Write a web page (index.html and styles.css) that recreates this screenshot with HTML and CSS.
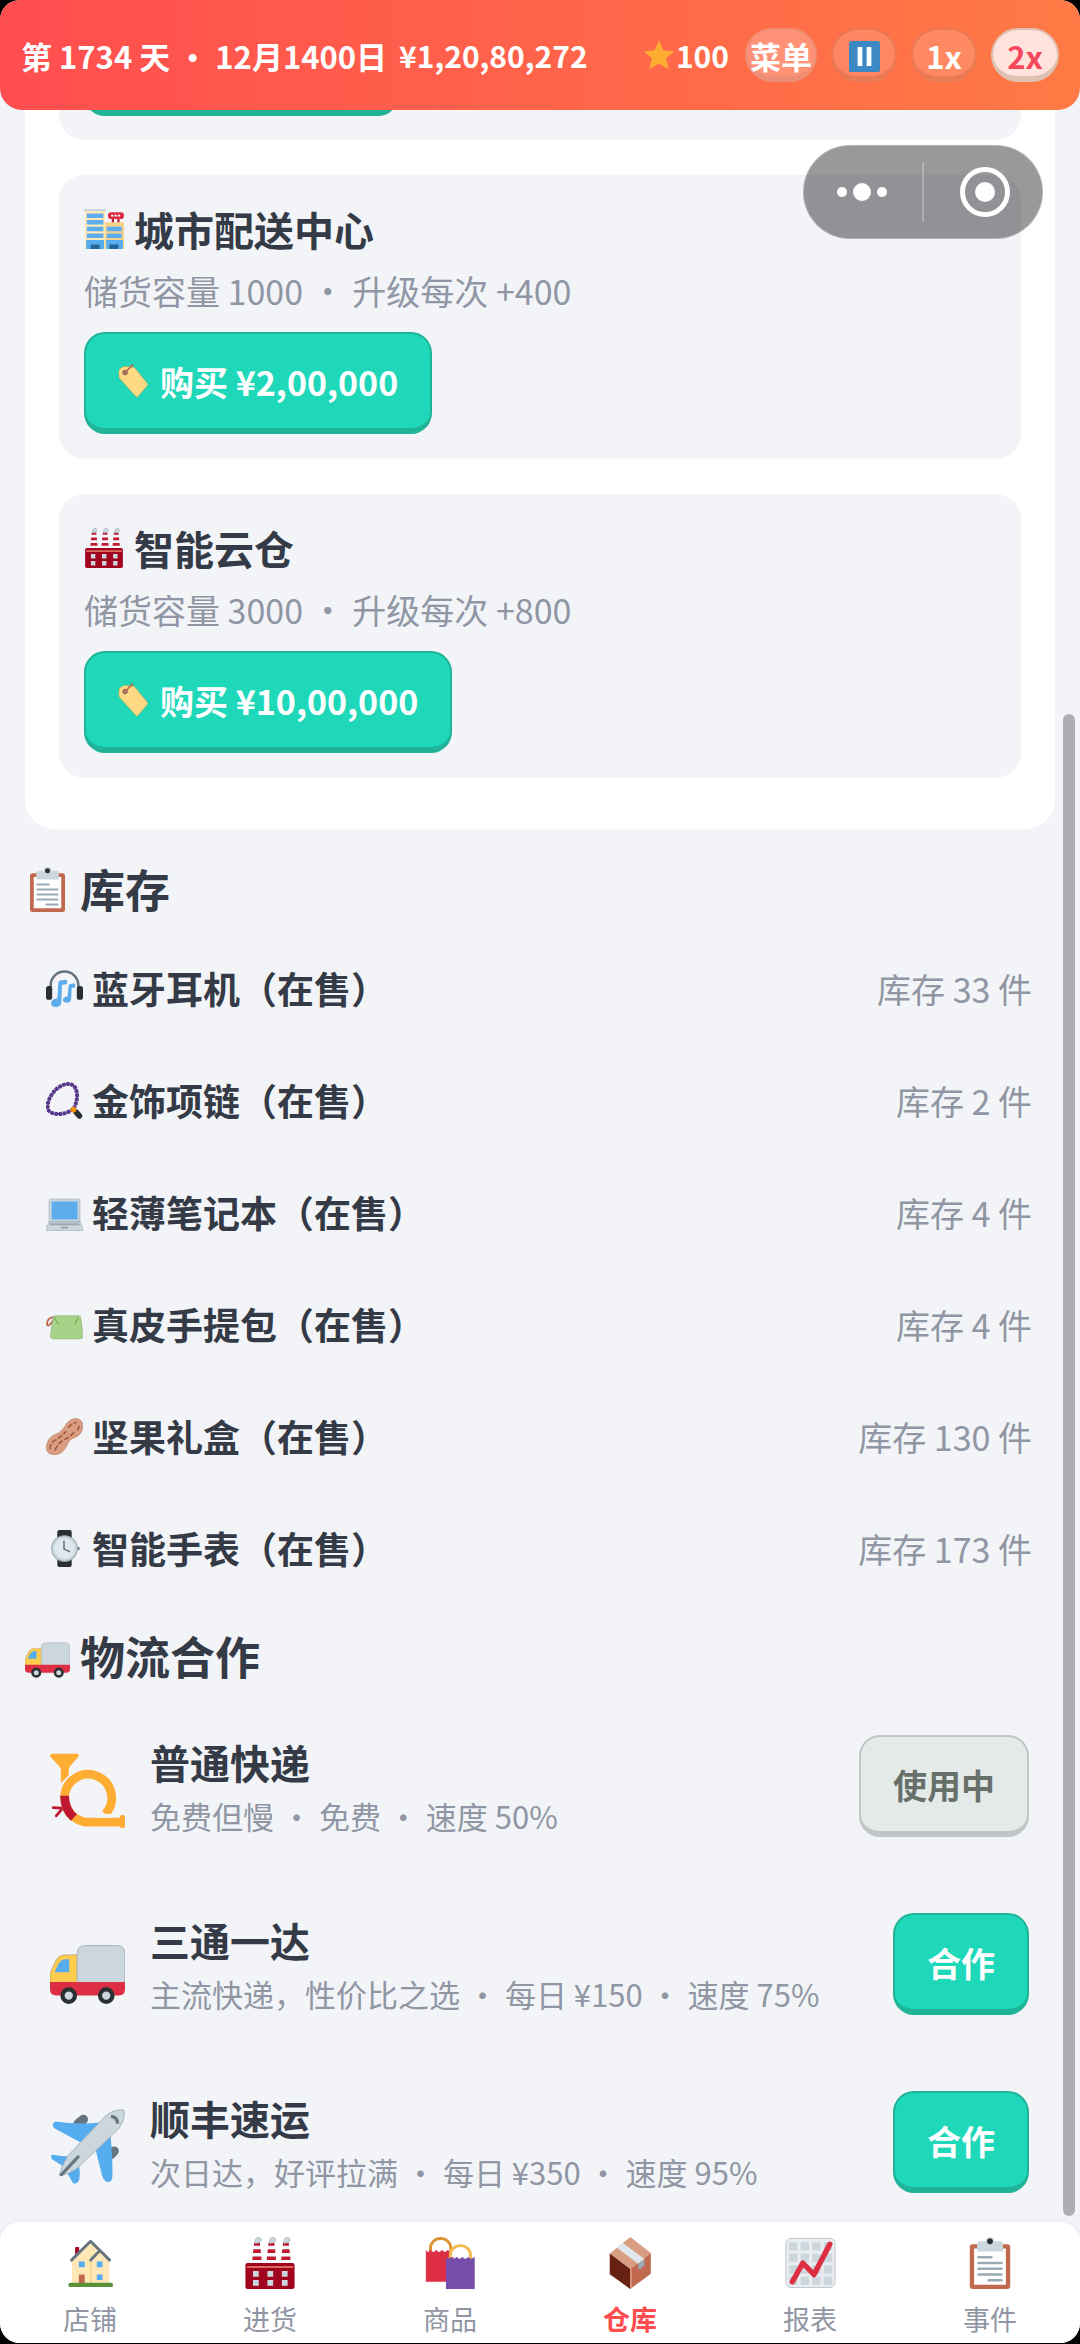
FILE: index.html
```
<!DOCTYPE html><html lang="zh-CN"><head><meta charset="utf-8"><meta name="viewport" content="width=device-width">
<title>仓库</title>
<link rel="stylesheet" href="styles.css">
</head>
<body>
<svg class="defs" aria-hidden="true">
  <symbol id="i-star" viewBox="0 0 36 36">
    <path fill="#ffac33" d="M18 1.500l5 11.300 12.500 1.100-9.500 8.200 2.900 12.200L18 27.800 7.100 34.300 10 22.100.5 13.900 13 12.800z" stroke="#ffac33" stroke-linejoin="round"/>
  </symbol>
  <symbol id="i-pause" viewBox="0 0 36 36">
    <rect width="36" height="36" rx="3" fill="#3b88c3"/>
    <path fill="#fff" d="M10 7h5.500v22H10zM20.500 7H26v22h-5.500z"/>
  </symbol>
  <symbol id="i-store" viewBox="0 0 36 36">
    <path fill="#ffe8b6" d="M1 1h18v35H1z"/>
    <path fill="#f4d28a" d="M19 12h17v24H19z"/>
    <path fill="#ccd6dd" d="M0 0h20v2H0z"/>
    <path fill="#5dadec" d="M2.500 4h15v4h-15zM2.500 10h15v4h-15zM2.500 16h15v4h-15zM2.500 22h15v4h-15zM20.500 16H34v4H20.500zM20.500 22H34v4H20.500z"/>
    <path fill="#55acee" d="M2 28h16v8H2zM20 28h15v8H20z"/>
    <path fill="#226699" d="M6 32h8v4H6zM23 32h8v4h-8z"/>
    <path fill="#be1931" d="M25 7h2v5h-2zM30 7h2v5h-2z"/>
    <rect x="21.500" y="3" width="14.500" height="6" rx="3" fill="#dd2e44"/>
    <path stroke="#fff" stroke-width="1.500" stroke-dasharray="2 1" d="M24.500 6h9"/>
  </symbol>
  <symbol id="i-factory" viewBox="0 0 36 36">
    <path fill="#f5f8fa" d="M7 4h4l1.500 15h-7zM17 4h4l1.500 15h-7zM27 4h4l1.500 15h-7z"/>
    <path fill="#be1931" d="M7 4h4l.200 2H6.800zM6.500 8.500h5l.200 2.500H6.200zM6 13.500h6l.200 2.500H5.700zM17 4h4l.200 2h-4.400zM16.500 8.500h5l.200 2.500h-5.500zM16 13.500h6l.200 2.500h-6.500zM27 4h4l.200 2h-4.400zM26.500 8.500h5l.200 2.500h-5.500zM26 13.500h6l.200 2.500h-6.500z"/>
    <path fill="#ccd6dd" stroke="#99aab5" stroke-width=".5" d="M8 4.500c-1-2 0-4.200 2-4.200s2.500 2.400 1 3.400zM18 4.500c-1-2 0-4.200 2-4.200s2.500 2.400 1 3.400zM28 4.500c-1-2 0-4.200 2-4.200s2.500 2.400 1 3.400z"/>
    <rect x="1" y="18" width="34" height="18" rx="1.500" fill="#a0041e"/>
    <path fill="#dd6b5c" d="M2 20h32v1.500H2z"/>
    <path fill="#ccd6dd" d="M6.200 23.500h4v4h-4zM16.200 23.500h4v4h-4zM26.200 23.500h4v4h-4zM6.200 29.800h4v4h-4zM16.200 29.800h4v4h-4zM26.200 29.800h4v4h-4z"/>
  </symbol>
  <symbol id="i-tag" viewBox="0 0 36 36">
    <path fill="#ffd983" stroke="#c9a24e" stroke-width=".6" stroke-linejoin="round" d="M1 13V7.500Q1 6 2.200 5.200L5 3.200Q6 2.500 7.500 2.600L16 3.500Q17.500 3.700 18.400 5L31 20.500Q32 21.600 31 22.800L21 34.500Q20 35.600 19 34.500L2 15.500Q1 14.300 1 13z"/>
    <circle cx="7.500" cy="9" r="3" fill="#99795a"/>
    <path stroke="#c1694f" stroke-width="1.800" stroke-linecap="round" d="M7.500 9L15.500.9"/>
  </symbol>
  <symbol id="i-clipboard" viewBox="0 0 36 36">
    <rect x="4" y="5" width="28" height="31" rx="2" fill="#c1694f"/>
    <path fill="#fff" d="M7 8h22v25H7z"/>
    <path fill="#ccd6dd" d="M25 3h-4a3 3 0 0 0-6 0h-4a2 2 0 0 0-2 2v5h18V5a2 2 0 0 0-2-2z"/>
    <circle cx="18" cy="3" r="2" fill="#292f33"/>
    <path stroke="#99aab5" stroke-width="1.700" stroke-linecap="round" d="M10 14h9M10 18h16M10 22h16M10 26h16M17 30h9"/>
  </symbol>
  <symbol id="i-headphone" viewBox="0 0 36 36">
    <path fill="none" stroke="#66757f" stroke-width="2.500" d="M4.500 20v-5a13.500 13.500 0 0 1 27 0v5"/>
    <rect y="15.500" width="6" height="13.500" rx="2.500" fill="#292f33"/>
    <rect x="30" y="15.500" width="6" height="13.500" rx="2.500" fill="#292f33"/>
    <path fill="#5dadec" d="M12 12.500Q12 10.500 14 10.200L19.500 9.500Q21 9.500 20.500 11.500L20.300 13.500 15.500 14.500 15 31Q15 36 10 36 5 36 5 32.500 5 28.500 11 27.500zM22 15.500Q22 14 24 13.700L27.500 13Q29 13 28.500 15.500L28.300 17 25 17.500 24.500 28Q24 31.800 20.500 31.800 16.500 31.800 16.500 29 16.500 26 21 25.500z"/>
  </symbol>
  <symbol id="i-beads" viewBox="0 0 36 36">
    <path fill="none" stroke="#7450a8" stroke-width="2" d="M27 26C30 20 32 11 28 5 24-.5 15 2 9 8 3 14 0 23 2.500 27.500 6 33 20 32 27 26z"/>
    <path fill="none" stroke="#553788" stroke-width="3.800" stroke-dasharray="3 1" d="M27 26C30 20 32 11 28 5 24-.5 15 2 9 8 3 14 0 23 2.500 27.500 6 33 20 32 27 26z"/>
    <path stroke="#292f33" stroke-width="5.500" stroke-linecap="round" d="M29.500 29.500l3 3.500"/>
    <circle cx="26.800" cy="26.800" r="2.800" fill="#f4900c"/>
  </symbol>
  <symbol id="i-laptop" viewBox="0 0 36 36">
    <path fill="#ccd6dd" stroke="#99aab5" stroke-width=".6" d="M4 5h28q1 0 1 1v21H3V6q0-1 1-1zM3 27h30l3 6.500V35q0 .7-1 .7H1q-1 0-1-.7v-1.500z"/>
    <path fill="#5dadec" d="M5.500 7.300h25.200v17.500H5.500z"/>
    <path fill="#9aa7b0" d="M4 28.500h28l.8 2H3.200zM15 31.500h6l.7 2.200h-7.400z"/>
  </symbol>
  <symbol id="i-clutch" viewBox="0 0 36 36">
    <path fill="none" stroke="#c1694f" stroke-width="1.800" d="M9 11.500C5 10 1 13 1 17.500c0 3 4 1 6-4"/>
    <path fill="#a6d388" stroke="#8fae7d" stroke-width=".6" d="M8.800 9.500h23.500q1.200 0 1.500 1.500L36 29q0 3-3 3H7.500q-3.500 0-3.300-3L7 11.500q.3-2 1.800-2z"/>
    <path fill="none" stroke="#77b255" stroke-width="1.200" d="M8 11l4 7M31.500 11l-3.500 7"/>
  </symbol>
  <symbol id="i-peanut" viewBox="0 0 36 36">
    <path fill="#d99e82" stroke="#b87a5c" stroke-width=".6" d="M19 7C22 2 28-1 32.500 1.500 37 4 36.500 10.500 33.500 15c-3 4-8 4-10.500 7-3 4-4 10-9.500 12.500C8 37 1 36 .5 29.500 0 23 4 18 9 16c5-2 7-4 10-9z"/>
    <path fill="none" stroke="#a0563a" stroke-width="1.500" stroke-linecap="round" stroke-dasharray="4 3" d="M22 9q3-4 7-4.500M4 30q0-6 5-8.500t10-8M9 31q3-7 9-10t11-9M32 8q0 3-3 5"/>
  </symbol>
  <symbol id="i-watch" viewBox="0 0 36 36">
    <path fill="#292f33" d="M13 0h10q2 0 2 2v6H11V2q0-2 2-2zM11 28h14v6q0 2-2 2H13q-2 0-2-2z"/>
    <circle cx="31" cy="18" r="1.800" fill="#66757f"/>
    <circle cx="18" cy="18" r="12.500" fill="#ccd6dd" stroke="#99aab5"/>
    <circle cx="18" cy="18" r="10" fill="#e1e8ed"/>
    <path fill="none" stroke="#66757f" stroke-width="1.500" stroke-linecap="round" d="M17.500 11v7.500l5.500 2.500"/>
  </symbol>
  <symbol id="i-truck" viewBox="0 0 36 36">
    <path fill="#ffcc4d" stroke="#b7a06a" stroke-width=".4" d="M13.500 11.500H7Q4.500 11.500 3 14L.8 18.500Q0 20 0 21.500V26h13.500z"/>
    <path fill="#55acee" d="M9.200 13.500v6.300H2.200L4 16q1.300-2.500 3.500-2.500z"/>
    <path fill="#ccd6dd" stroke="#99aab5" stroke-width=".4" d="M13 26V11q0-4 4-4h15q4 0 4 4v15z"/>
    <path fill="#dd2e44" d="M0 24.500h36V28q0 3-3 3H3q-3 0-3-3z"/>
    <g fill="#ccd6dd" stroke="#292f33" stroke-width="2"><circle cx="9" cy="31" r="3"/><circle cx="27" cy="31" r="3"/></g>
  </symbol>
  <symbol id="i-horn" viewBox="0 0 36 36">
    <path fill="#ffac33" d="M.8.300h12.400q1.200.6.300 1.600L9.500 6.500Q9 7.200 9 8.500v2.200L5.200 14.500V8.500Q5.200 7.500 4.500 6.500L.2 1.800Q-.2.800.8.300z"/>
    <path fill="none" stroke="#ffac33" stroke-width="4.200" d="M26.500 29.300A11.300 11.300 0 1 0 7 21.500Q7.500 31 17 33.200H35"/>
    <path fill="none" stroke="#be1931" stroke-width="4.200" d="M7 20.500Q7 27 11.500 31"/>
    <path fill="none" stroke="#be1931" stroke-width="1.300" stroke-linecap="round" d="M5.500 26.500l-4-.3M5.500 27.200l-2.500 3"/>
    <rect x="33.500" y="29.800" width="2.500" height="6.200" rx="1" fill="#ffac33"/>
    <path fill="#f2f4f8" d="M23 29.200h7v1.900h-7z"/>
  </symbol>
  <symbol id="i-plane" viewBox="0 0 36 36">
    <path stroke="#66757f" stroke-width="4.500" stroke-linecap="round" d="M13.500 7l2.500-2M29 22l1.800-1.800"/>
    <path fill="#55acee" d="M2.500 6Q13 7.500 24 6.500L14.500 16 2.500 9.500Q0 7.500 2.500 6zM29 12q1 11 1 19.500 0 3.500-2 3.500t-3-3L22 20zM1.500 22Q6 23 9.500 22.500L7 28 .8 24Q0 22 1.500 22zM13.700 26q1 4.500.3 8-1 2.500-3 1.500L7 28.500z"/>
    <path fill="#ccd6dd" stroke="#99aab5" stroke-width=".4" d="M35.500.5q.8 5-3 9.500L13 28.500Q9 31.500 4.500 32 6 26 9 22L26.500 3.500Q31-.2 35.500.5z"/>
    <path fill="none" stroke="#66757f" stroke-width="1.600" d="M29.300 3.500q3 .3 3.200 3.500"/>
    <path stroke="#66757f" stroke-width="1.500" stroke-linecap="round" d="M5.500 31.500L13.500 23"/>
  </symbol>
  <symbol id="i-house" viewBox="0 0 36 36">
    <path fill="#a0041e" d="M7.700 7h2.800v6H7.700z"/>
    <path fill="#ffe8b6" d="M5.500 16L18.400 3l13 13v16h-26z"/>
    <path stroke="#f4d28a" d="M18.500 16v16"/>
    <path fill="none" stroke="#66757f" stroke-width="2" stroke-linecap="round" stroke-linejoin="round" d="M5.200 16L18.400 3l13.200 13M18.500 16l6-6.300"/>
    <path fill="#55acee" d="M10.300 17h4v4h-4zM22.700 17h4v4h-4zM22.700 26h4v3.700h-4z"/>
    <path fill="#c1694f" d="M10.300 26h4v6h-4z"/>
    <rect x="3" y="31.700" width="31" height="3" rx="1.500" fill="#5c913b"/>
  </symbol>
  <symbol id="i-bags" viewBox="0 0 36 36">
    <path fill="none" stroke="#da9233" stroke-width="2" d="M4.500 11V7.500a7 6.500 0 0 1 14 0V11"/>
    <path fill="#dd2e44" d="M1.300 9l1.600 1.500L4.500 9l2 1.500 2-1.500 2 1.500 2-1.500 2 1.500 2-1.500 2 1.500L20.500 9v22H1.300z"/>
    <path fill="#fff" d="M18.200 14v-1.500a7 6.500 0 0 1 14 0V14z"/>
    <path fill="none" stroke="#f2bb4e" stroke-width="2" d="M18.200 16v-3.500a7 6.500 0 0 1 14 0V16"/>
    <path fill="#744eaa" d="M15.200 13.800l1.600 1.400 1.800-1.400 2 1.400 2-1.400 2 1.400 2-1.400 2 1.400 2-1.400 2 1.400 2.500-1.400V36H15.200z"/>
  </symbol>
  <symbol id="i-box" viewBox="0 0 36 36">
    <path fill="#d99e82" d="M18.200 0l14.200 11-14.200 11.200L4 11.500z"/>
    <path fill="#662113" d="M4 11.500l14.200 10.700V36L4 25.800z"/>
    <path fill="#c1694f" d="M32.400 11v14.500L18.200 36V22.200z"/>
    <path stroke="#d99e82" d="M18.700 22v13.500"/>
    <path fill="#e1e8ed" d="M12.800 4L8.700 7.300l15 11.200L28 15.200z"/>
    <path fill="#99aab5" d="M23.700 18.500L28 15.200v5.300l-1.200-.3-1 1.800-1-.2-1.100 1.100z"/>
  </symbol>
  <symbol id="i-chart" viewBox="0 0 36 36">
    <rect x="1.300" y="1" width="34" height="34" rx="3.500" fill="#e9edf0" stroke="#b5bec5" stroke-width=".6"/>
    <path stroke="#ccd6dd" stroke-width="5.800" stroke-dasharray="5.800 2.200" d="M3.500 6.500h30M3.500 14.500h30M3.500 22.500h30M3.500 30.300h30"/>
    <path fill="none" stroke="#dd2e44" stroke-width="3.700" stroke-linecap="round" stroke-linejoin="round" d="M5.800 31L13 18l7.800 8L31.700 5"/>
  </symbol>
</svg>

<div class="app">
  <header class="topbar">
    <span>第 1734 天 ・ 12月1400日</span>
    <span class="money">¥1,20,80,272</span>
    <span class="star"><svg class="icon"><use href="#i-star"/></svg>100</span>
    <button class="pill pill-menu">菜单</button>
    <button class="pill" aria-label="暂停"><svg class="icon"><use href="#i-pause"/></svg></button>
    <button class="pill">1x</button>
    <button class="pill pill-on">2x</button>
  </header>

  <main>
    <section class="panel">
      <div class="card card-top"><div class="btn-edge"></div></div>
      <div class="card">
        <h3><svg class="icon"><use href="#i-store"/></svg>城市配送中心</h3>
        <p>储货容量 1000 ・ 升级每次 +400</p>
        <button class="btn"><svg class="icon"><use href="#i-tag"/></svg>购买 ¥2,00,000</button>
      </div>
      <div class="card">
        <h3><svg class="icon"><use href="#i-factory"/></svg>智能云仓</h3>
        <p>储货容量 3000 ・ 升级每次 +800</p>
        <button class="btn"><svg class="icon"><use href="#i-tag"/></svg>购买 ¥10,00,000</button>
      </div>
    </section>

    <h2><svg class="icon"><use href="#i-clipboard"/></svg>库存</h2>
    <ul class="stock">
      <li><svg class="icon"><use href="#i-headphone"/></svg><b>蓝牙耳机（在售）</b><span>库存 33 件</span></li>
      <li><svg class="icon"><use href="#i-beads"/></svg><b>金饰项链（在售）</b><span>库存 2 件</span></li>
      <li><svg class="icon"><use href="#i-laptop"/></svg><b>轻薄笔记本（在售）</b><span>库存 4 件</span></li>
      <li><svg class="icon"><use href="#i-clutch"/></svg><b>真皮手提包（在售）</b><span>库存 4 件</span></li>
      <li><svg class="icon"><use href="#i-peanut"/></svg><b>坚果礼盒（在售）</b><span>库存 130 件</span></li>
      <li><svg class="icon"><use href="#i-watch"/></svg><b>智能手表（在售）</b><span>库存 173 件</span></li>
    </ul>

    <h2><svg class="icon"><use href="#i-truck"/></svg>物流合作</h2>
    <ul class="partners">
      <li>
        <svg class="icon"><use href="#i-horn"/></svg>
        <div><h3>普通快递</h3><p>免费但慢 ・ 免费 ・ 速度 50%</p></div>
        <button class="btn" disabled>使用中</button>
      </li>
      <li>
        <svg class="icon"><use href="#i-truck"/></svg>
        <div><h3>三通一达</h3><p>主流快递，性价比之选 ・ 每日 ¥150 ・ 速度 75%</p></div>
        <button class="btn">合作</button>
      </li>
      <li>
        <svg class="icon"><use href="#i-plane"/></svg>
        <div><h3>顺丰速运</h3><p>次日达，好评拉满 ・ 每日 ¥350 ・ 速度 95%</p></div>
        <button class="btn">合作</button>
      </li>
    </ul>
  </main>

  <nav>
    <a href="#shop"><svg class="icon"><use href="#i-house"/></svg>店铺</a>
    <a href="#buy"><svg class="icon"><use href="#i-factory"/></svg>进货</a>
    <a href="#goods"><svg class="icon"><use href="#i-bags"/></svg>商品</a>
    <a href="#depot" class="active"><svg class="icon"><use href="#i-box"/></svg>仓库</a>
    <a href="#report"><svg class="icon"><use href="#i-chart"/></svg>报表</a>
    <a href="#event"><svg class="icon"><use href="#i-clipboard"/></svg>事件</a>
  </nav>

  <div class="scrollbar"></div>
  <div class="capsule">
    <button aria-label="更多"><svg width="60" height="60" fill="#fff"><circle cx="10" cy="30" r="5"/><circle cx="30" cy="30" r="9"/><circle cx="50" cy="30" r="5"/></svg></button>
    <i></i>
    <button aria-label="关闭"><svg width="60" height="60" fill="#fff"><circle cx="30" cy="30" r="22.500" fill="none" stroke="#fff" stroke-width="5"/><circle cx="30" cy="30" r="10"/></svg></button>
  </div>
</div>
</body>
</html>
```
FILE: styles.css
```
:root {
  --red: #ff4d4f;
  --bg: #f2f4f8;
  --text: #343a46;
  --sub: #9096a3;
  --green: #1fd8b9;
  --green-dark: #1fb398;
}
* {
  box-sizing: border-box;
  margin: 0;
  padding: 0;
}
html {
  background: #000;
}
body {
  padding-bottom: 1px;
  font-family: "Noto Sans CJK SC", sans-serif;
  font-size: 34px;
  color: var(--text);
}
button {
  font: inherit;
  font-weight: bold;
  cursor: pointer;
}
ul {
  list-style: none;
}
.defs {
  position: absolute;
  width: 0;
  height: 0;
}
.icon {
  width: 1em;
  height: 1em;
  flex: none;
  overflow: visible;
}
.app {
  position: relative;
  display: flex;
  flex-direction: column;
  height: calc(100vh - 1px);
  background: var(--bg);
  border-radius: 20px;
  overflow: hidden;
}

/* header */
.topbar {
  flex: none;
  display: flex;
  align-items: center;
  height: 110px;
  padding: 0 21px;
  background: linear-gradient(90deg, #ff4d4f, #ff7a45);
  border-radius: 0 0 22px 22px;
  color: #fff;
  font-size: 31px;
  font-weight: bold;
  white-space: nowrap;
}
.money {
  margin-left: 12px;
  font-size: 30px;
}
.star {
  display: flex;
  align-items: center;
  gap: 2px;
  margin-left: auto;
  font-size: 30px;
}
.pill {
  display: flex;
  align-items: center;
  justify-content: center;
  width: 66px;
  height: 54px;
  margin-left: 14px;
  padding-top: 6px;
  background: rgba(255, 255, 255, .15);
  border: 2px solid rgba(150, 70, 40, .2);
  border-bottom-width: 6px;
  border-radius: 27px;
  color: #fff;
  line-height: 40px;
}
.pill-menu {
  width: 72px;
  margin-left: 16px;
  background: rgba(255, 255, 255, .25);
  border-color: rgba(190, 130, 120, .25);
}
.pill-on {
  width: 68px;
  background: #ffe3dc;
  border-color: #dfc0b2;
  color: #f5475b;
}

main {
  flex: 1;
  min-height: 0;
  padding: 0 25px;
  overflow-y: auto;
  scrollbar-width: none;
}
.panel {
  display: flex;
  flex-direction: column;
  gap: 35px;
  margin-bottom: 26px;
  padding: 0 34px 51px;
  background: #fff;
  border-radius: 0 0 30px 30px;
}
.card {
  padding: 24px 25px 25px;
  background: var(--bg);
  border-radius: 25px;
}
.card-top {
  height: 30px;
  padding-top: 0;
  border-radius: 0 0 25px 25px;
}
.btn-edge {
  width: 315px;
  height: 6px;
  overflow: hidden;
}
.btn-edge::before {
  content: "";
  display: block;
  height: 60px;
  margin-top: -54px;
  background: var(--green-dark);
  border-radius: 21px;
}
h3 {
  display: flex;
  align-items: center;
  gap: 10px;
  font-size: 40px;
  line-height: 60px;
}
p {
  color: var(--sub);
}
.card p {
  margin: 6px 0 16px;
  line-height: 51px;
}
.btn {
  display: flex;
  align-items: center;
  gap: 8px;
  flex: none;
  height: 102px;
  padding: 0 32px;
  background: var(--green);
  border: 2px solid var(--green-dark);
  border-bottom-width: 6px;
  border-radius: 21px;
  color: #fff;
  white-space: nowrap;
}
.btn:disabled {
  background: #e4eae8;
  border-color: #c0c5c5;
  color: #68706c;
  cursor: default;
}
h2 {
  display: flex;
  align-items: center;
  gap: 10px;
  margin: 18px 0 9px;
  font-size: 45px;
  line-height: 68px;
}

.stock li {
  display: flex;
  align-items: center;
  gap: 9px;
  height: 112px;
  padding: 0 23px 0 21px;
  font-size: 37px;
}
.stock span {
  margin-left: auto;
  color: var(--sub);
  font-size: 34px;
}

.partners {
  display: flex;
  flex-direction: column;
  gap: 10px;
  padding-top: 3px;
}
.partners li {
  display: flex;
  align-items: center;
  gap: 25px;
  height: 168px;
  padding: 0 26px 0 25px;
}
.partners .icon {
  margin-top: 8px;
  font-size: 75px;
}
.partners div {
  flex: 1;
}
.partners p {
  font-size: 31px;
  line-height: 48px;
}

nav {
  flex: none;
  display: flex;
  position: relative;
  height: 121px;
  padding-top: 15px;
  background: #fff;
  border-radius: 20px 20px 0 0;
  box-shadow: 0 -2px 4px rgba(0, 0, 0, .03);
}
nav a {
  flex: 1;
  display: flex;
  flex-direction: column;
  align-items: center;
  gap: 10px;
  color: var(--sub);
  font-size: 27px;
  line-height: 40px;
  text-decoration: none;
}
nav .icon {
  width: 52px;
  height: 52px;
}
nav .active {
  color: var(--red);
  font-weight: bold;
}

/* overlays */
.scrollbar {
  position: absolute;
  top: 714px;
  right: 5px;
  bottom: 127px;
  width: 12px;
  background: #adaeb1;
  border-radius: 6px;
}
.capsule {
  position: absolute;
  top: 145px;
  right: 37px;
  display: flex;
  align-items: center;
  width: 240px;
  height: 94px;
  background: rgba(0, 0, 0, .4);
  border: 1px solid rgba(255, 255, 255, .25);
  border-radius: 47px;
}
.capsule button {
  flex: 1;
  display: flex;
  justify-content: center;
  background: none;
  border: 0;
}
.capsule i {
  width: 2px;
  height: 60px;
  margin: 0 3px;
  background: rgba(255, 255, 255, .25);
}
```
